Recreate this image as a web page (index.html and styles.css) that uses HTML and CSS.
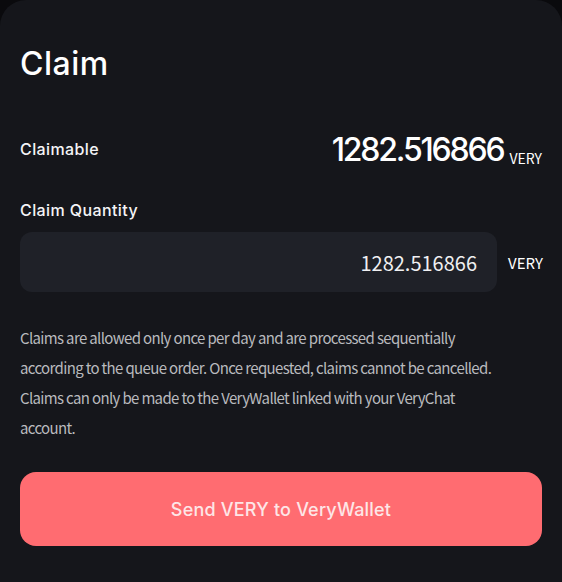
FILE: index.html
```html
<!DOCTYPE html>
<html lang="en">
<head>
  <meta charset="UTF-8">
  <meta name="viewport" content="width=device-width, initial-scale=1.0">
  <title>Claim</title>
  <link rel="stylesheet" href="styles.css">
</head>
<body>
  <div class="claim-card">
    <!-- Heading -->
    <h1 class="claim-title">Claim</h1>

    <!-- Claimable amount -->
    <div class="claimable-row">
      <span class="row-label">Claimable</span>
      <span class="claimable-amount">
        <span class="amount-value">1282.516866</span>
        <span class="amount-unit">VERY</span>
      </span>
    </div>

    <!-- Quantity input -->
    <div class="quantity-group">
      <label class="row-label" for="quantity">Claim Quantity</label>
      <div class="quantity-row">
        <input type="text" id="quantity" class="quantity-input" value="1282.516866">
        <span class="quantity-unit">VERY</span>
      </div>
    </div>

    <p class="claim-notice">
      Claims are allowed only once per day and are processed sequentially
      according to the queue order. Once requested, claims cannot be cancelled.
      Claims can only be made to the VeryWallet linked with your VeryChat
      account.
    </p>

    <button type="button" class="send-button">Send VERY to VeryWallet</button>
  </div>
</body>
</html>
```

FILE: styles.css
```css
body {
  margin: 0;
  padding: 0;
  background: #0a0a0d;
  font-family: 'Noto Sans CJK KR', 'Noto Sans', sans-serif;
  color: #fff;
}

.claim-card {
  box-sizing: border-box;
  height: 582px;
  padding: 45px 20px 0;
  background: #15161b;
  border-radius: 26px 26px 0 0;
}

.claim-title {
  margin: 0;
  font-family: 'Inter', sans-serif;
  font-size: 32px;
  font-weight: 500;
  line-height: 38px;
  letter-spacing: 0.5px;
}

.claimable-row {
  display: flex;
  justify-content: space-between;
  align-items: flex-end;
  margin-top: 48px;
}

.row-label {
  font-family: 'Inter', sans-serif;
  font-size: 16px;
  font-weight: 500;
  letter-spacing: 0.4px;
  color: #f4f4f6;
}

.claimable-row .row-label {
  margin-bottom: 10px;
}

.claimable-amount {
  display: flex;
  align-items: baseline;
  gap: 6px;
}

.amount-value {
  font-family: 'Inter', sans-serif;
  font-size: 32px;
  font-weight: 500;
  letter-spacing: -2.2px;
  line-height: 38px;
}

.amount-unit {
  font-size: 14px;
  position: relative;
  top: 3px;
}

.quantity-group {
  margin-top: 31px;
}

.quantity-group .row-label {
  display: block;
  line-height: 20px;
}

.quantity-row {
  display: flex;
  align-items: center;
  gap: 11px;
  margin-top: 12px;
}

.quantity-input {
  flex: 1;
  height: 60px;
  box-sizing: border-box;
  padding: 0 20px;
  border: none;
  border-radius: 12px;
  background: #1f2128;
  color: #f0f0f2;
  font-family: 'Noto Sans CJK KR', 'Noto Sans', sans-serif;
  font-size: 20px;
  text-align: right;
  outline: none;
}

.quantity-unit {
  font-size: 15px;
  width: 34px;
  text-align: right;
}

.claim-notice {
  max-width: 490px;
  margin: 31px 0 0;
  font-size: 15px;
  letter-spacing: -0.65px;
  line-height: 30px;
  color: #b9babe;
}

.send-button {
  display: block;
  width: 100%;
  height: 74px;
  margin-top: 29px;
  border: none;
  border-radius: 16px;
  background: #ff6c71;
  color: #fde6e7;
  font-family: 'Inter', sans-serif;
  font-size: 18px;
  font-weight: 500;
  letter-spacing: 0.2px;
  cursor: pointer;
}
```
